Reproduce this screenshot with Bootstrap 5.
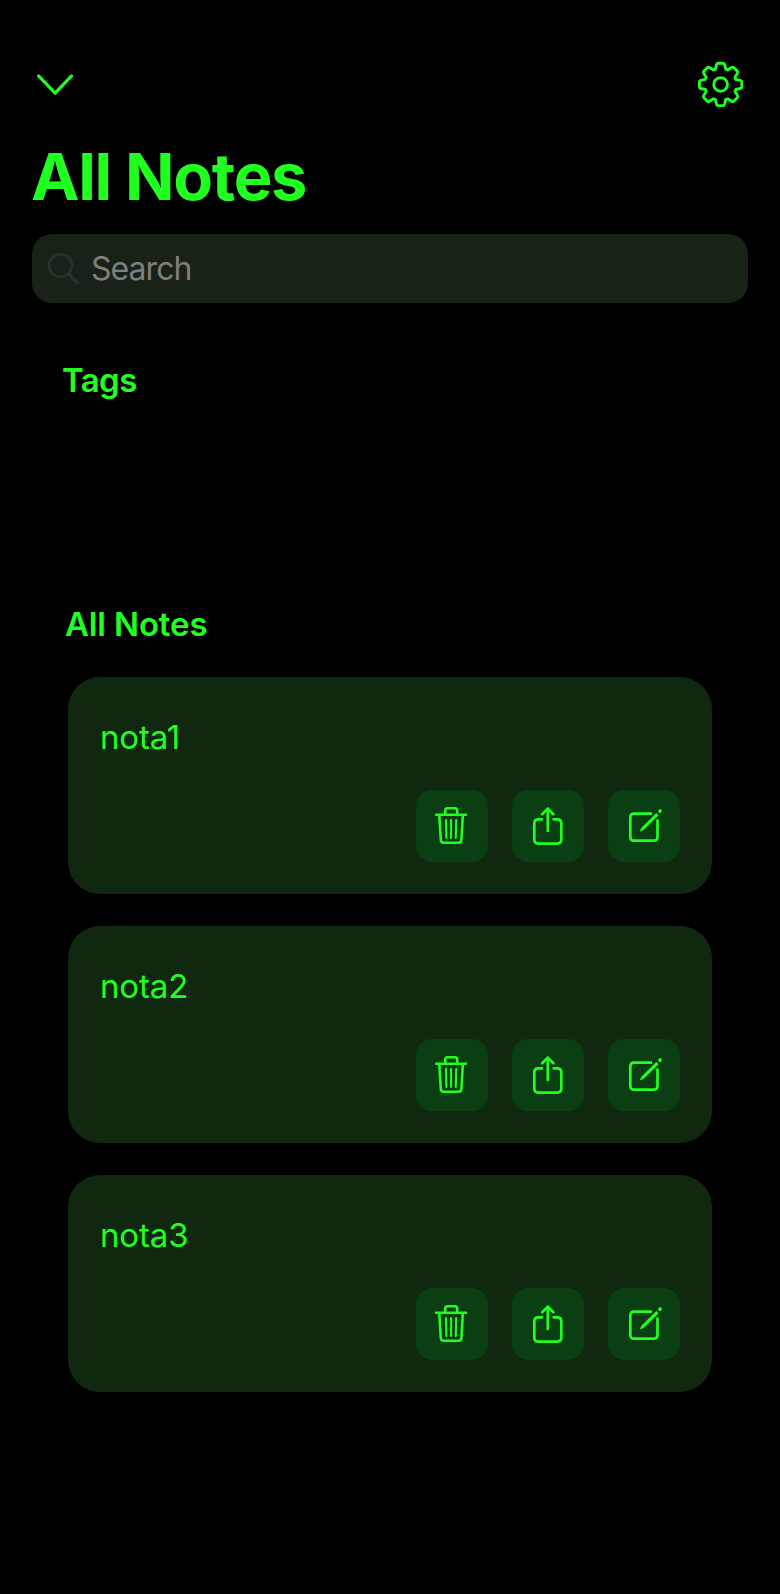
<!DOCTYPE html>
<html lang="en" data-bs-theme="dark">
<head>
<meta charset="utf-8">
<meta name="viewport" content="width=device-width, initial-scale=1">
<title>All Notes</title>
<link rel="stylesheet" href="https://cdn.jsdelivr.net/npm/bootstrap@5.3.0/dist/css/bootstrap.min.css">
<style>
:root { --neon: #20ff20; }
body { background: #000; color: var(--neon); font-family: Inter, "Liberation Sans", sans-serif; font-size: 33px; line-height: 40px; min-height: 1594px; }
h1, h2 { color: var(--neon) !important; }
svg { display: block; fill: none; stroke: currentColor; stroke-linecap: round; stroke-linejoin: round; }
.screen { padding: 58px 32px 0; }
.plain-btn { color: var(--neon); background: none; border: 0; padding: 0; }
.page-title { font-size: 65px; line-height: 80px; font-weight: 700; margin: 27px 0 17px -1px; letter-spacing: -1.3px; }
.search-box { height: 69px; border-radius: 20px; background: #182217; padding-left: 14px; gap: 11px; }
.search-box svg { color: #2c312e; flex: none; }
.search-box input, .search-box input:focus { background: none; border: 0; padding: 0; box-shadow: none; font-size: 32px; line-height: 40px; height: 40px; letter-spacing: -.95px; }
.search-box input::placeholder { color: #7f7f7f; opacity: 1; }
.section-head { font-size: 33px; line-height: 40px; font-weight: 600; margin: 0; letter-spacing: -.15px; }
.tags-area { margin-top: 57px; padding-left: 30px; height: 244px; }
.tags-area .section-head { letter-spacing: -.6px; }
.notes-area { padding: 0 36px; }
.notes-area .section-head { margin: 0 0 33px -3px; }
.note-card { --bs-card-bg: #102710; --bs-card-color: var(--neon); --bs-card-border-width: 0; --bs-card-border-radius: 32px; height: 217px; }
.note-card .card-body { padding: 40px 32px 32px; letter-spacing: -.15px; }
.note-list { gap: 32px; }
.note-actions { gap: 24px; }
.tool-btn { width: 72px; height: 72px; border: 0; padding: 0; border-radius: 16px; background: #093f13; color: var(--neon); }
.tool-btn:hover { background: #0d4c19; color: var(--neon); }
</style>
</head>
<body>
<svg width="0" height="0" class="position-absolute" aria-hidden="true">
  <symbol id="trash" viewBox="0 0 72 72">
    <g stroke-width="2.6">
      <path d="M20.1 24.7H50M29.2 24V20.6Q29.2 18.2 31.6 18.2H38.9Q41.2 18.2 41.2 20.6V24"/>
      <path d="M23.3 25.5L24.8 50Q25 52.7 27.6 52.7H42.6Q45.2 52.7 45.4 50L46.8 25.5"/>
    </g>
    <path stroke-width="2.1" d="M30 30L30.4 48M35.1 30V48M40.2 30L39.8 48"/>
  </symbol>
  <symbol id="share" viewBox="0 0 72 72">
    <path stroke-width="2.7" d="M30 29.3H26.3Q22.3 29.3 22.3 33.3V49.6Q22.3 53.6 26.3 53.6H45.3Q49.3 53.6 49.3 49.6V33.3Q49.3 29.3 45.3 29.3H41.6M35.8 18.6V41M30.2 24.2L35.8 18.6L41.4 24.2"/>
  </symbol>
  <symbol id="edit" viewBox="0 0 72 72">
    <path stroke-width="2.7" stroke-linecap="butt" d="M44 23.7H26.3Q22.3 23.7 22.3 27.7V46.7Q22.3 50.7 26.3 50.7H45.5Q49.5 50.7 49.5 46.7V29.5"/>
    <path fill="currentColor" stroke="none" d="M48.3 22.9L50.6 25.2L36.1 39.5L33 41.2Q31.8 41.4 32.2 40.3L33.9 37.2Z"/>
    <path stroke-width="3.5" d="M51.9 21.2L52.2 20.9"/>
  </symbol>
</svg>
<main class="screen">
  <header class="d-flex justify-content-between">
    <button class="plain-btn" aria-label="Collapse"><svg width="46" height="52" viewBox="32 58 46 52" stroke-width="3.2"><path d="M38.6 75.9L55.1 93.1L71.6 75.9"/></svg></button>
    <button class="plain-btn" aria-label="Settings"><svg width="56" height="52" viewBox="-28.6 -26.4 56 52" stroke-width="2.9">
      <path id="teeth" d="M-5.1 -15.2L-4.1 -19.8Q-3.8 -21.2 -2.4 -21.2H2.4Q3.8 -21.2 4.1 -19.8L5.1 -15.2L7.1 -14.4L11.1 -16.9Q12.3 -17.7 13.3 -16.7L16.7 -13.3Q17.7 -12.3 16.9 -11.1L14.4 -7.1L15.2 -5.1"/>
      <use href="#teeth" transform="rotate(90)"/><use href="#teeth" transform="rotate(180)"/><use href="#teeth" transform="rotate(270)"/>
      <circle r="6.8"/></svg></button>
  </header>
  <h1 class="page-title">All Notes</h1>
  <div class="search-box d-flex align-items-center">
    <svg width="34" height="36" viewBox="46 251 34 36"><circle cx="60.5" cy="265.6" r="11.4" stroke-width="2.6"/><path d="M69.4 274.7L77.1 282.4" stroke-width="3.6"/></svg>
    <input class="form-control" type="text" placeholder="Search" aria-label="Search">
  </div>
  <section class="tags-area"><h2 class="section-head">Tags</h2></section>
  <section class="notes-area">
    <h2 class="section-head">All Notes</h2>
    <div class="note-list d-flex flex-column">
      <article class="card note-card"><div class="card-body d-flex flex-column justify-content-between">
        <div>nota1</div>
        <div class="note-actions d-flex justify-content-end">
          <button class="btn tool-btn" aria-label="Delete"><svg width="72" height="72"><use href="#trash"/></svg></button>
          <button class="btn tool-btn" aria-label="Share"><svg width="72" height="72"><use href="#share"/></svg></button>
          <button class="btn tool-btn" aria-label="Edit"><svg width="72" height="72"><use href="#edit"/></svg></button>
        </div></div></article>
      <article class="card note-card"><div class="card-body d-flex flex-column justify-content-between">
        <div>nota2</div>
        <div class="note-actions d-flex justify-content-end">
          <button class="btn tool-btn" aria-label="Delete"><svg width="72" height="72"><use href="#trash"/></svg></button>
          <button class="btn tool-btn" aria-label="Share"><svg width="72" height="72"><use href="#share"/></svg></button>
          <button class="btn tool-btn" aria-label="Edit"><svg width="72" height="72"><use href="#edit"/></svg></button>
        </div></div></article>
      <article class="card note-card"><div class="card-body d-flex flex-column justify-content-between">
        <div>nota3</div>
        <div class="note-actions d-flex justify-content-end">
          <button class="btn tool-btn" aria-label="Delete"><svg width="72" height="72"><use href="#trash"/></svg></button>
          <button class="btn tool-btn" aria-label="Share"><svg width="72" height="72"><use href="#share"/></svg></button>
          <button class="btn tool-btn" aria-label="Edit"><svg width="72" height="72"><use href="#edit"/></svg></button>
        </div></div></article>
    </div>
  </section>
</main>
<script src="https://cdn.jsdelivr.net/npm/bootstrap@5.3.0/dist/js/bootstrap.bundle.min.js"></script>
</body>
</html>
